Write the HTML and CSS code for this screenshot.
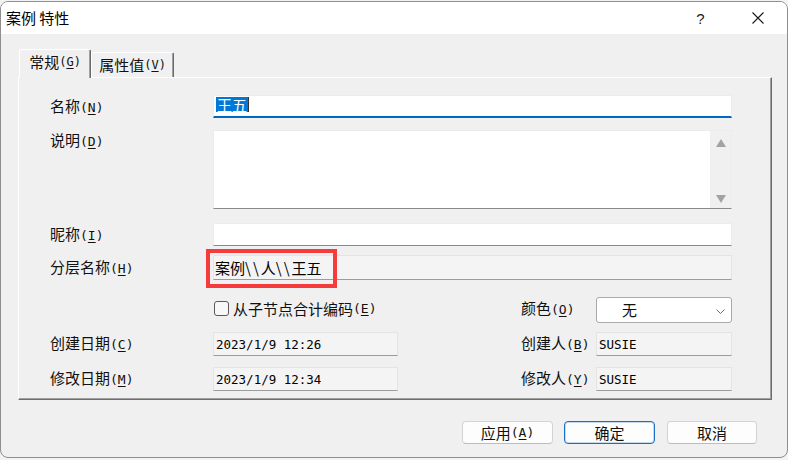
FILE: index.html
```html
<!DOCTYPE html>
<html lang="zh-CN">
<head>
<meta charset="utf-8">
<title>案例 特性</title>
<link rel="stylesheet" href="styles.css">
</head>
<body>
<div class="window">
  <div class="titlebar">
    <span class="title">案例 特性</span>
    <div class="caption">
      <span class="cap-btn help">?</span>
      <span class="cap-btn close">
        <svg width="12" height="12" viewBox="0 0 12 12"><path d="M0.5 0.5L11.5 11.5M11.5 0.5L0.5 11.5" stroke="#1a1a1a" stroke-width="1.1" fill="none"/></svg>
      </span>
    </div>
  </div>
  <div class="body">
    <div class="tabs">
      <div class="tab active">常规<span class="mn">(<u>G</u>)</span></div>
      <div class="tab">属性值<span class="mn">(<u>V</u>)</span></div>
    </div>
    <div class="panel">
      <div class="row r-name">
        <label class="lbl">名称<span class="mn">(<u>N</u>)</span></label>
        <div class="edit focused wide"><span class="sel">王五</span><span class="caret"></span></div>
      </div>
      <div class="row r-desc">
        <label class="lbl">说明<span class="mn">(<u>D</u>)</span></label>
        <div class="edit memo wide">
          <div class="scroll"><span class="arr up"></span><span class="arr down"></span></div>
        </div>
      </div>
      <div class="row r-nick">
        <label class="lbl">昵称<span class="mn">(<u>I</u>)</span></label>
        <div class="edit wide"></div>
      </div>
      <div class="row r-hier">
        <label class="lbl">分层名称<span class="mn">(<u>H</u>)</span></label>
        <div class="ro hier wide">
          <span class="htext">案例<span class="bs">\\</span>人<span class="bs">\\</span>王五</span>
          <div class="mark"></div>
        </div>
      </div>
      <div class="row r-check">
        <label class="chk"><span class="box"></span>从子节点合计编码<span class="mn">(<u>E</u>)</span></label>
        <label class="lbl2">颜色<span class="mn">(<u>O</u>)</span></label>
        <div class="combo">
          <span class="combo-val">无</span>
          <svg class="chev" width="9" height="5" viewBox="0 0 9 5"><path d="M0.5 0.5L4.5 4.5L8.5 0.5" stroke="#6b6b6b" stroke-width="1" fill="none"/></svg>
        </div>
      </div>
      <div class="row r-created">
        <label class="lbl">创建日期<span class="mn">(<u>C</u>)</span></label>
        <div class="ro date">2023/1/9 12:26</div>
        <label class="lbl2 gapped">创建人<span class="mn">(<u>B</u>)</span></label>
        <div class="ro user">SUSIE</div>
      </div>
      <div class="row r-modified">
        <label class="lbl">修改日期<span class="mn">(<u>M</u>)</span></label>
        <div class="ro date">2023/1/9 12:34</div>
        <label class="lbl2 gapped">修改人<span class="mn">(<u>Y</u>)</span></label>
        <div class="ro user">SUSIE</div>
      </div>
    </div>
    <div class="buttons">
      <div class="btn">应用<span class="mn">(<u>A</u>)</span></div>
      <div class="btn default">确定</div>
      <div class="btn cancel">取消</div>
    </div>
  </div>
</div>
</body>
</html>
```

FILE: styles.css
```css
html, body {
  margin: 0;
  padding: 0;
}
body {
  background: #f3f3f3;
  font-family: "Noto Sans CJK SC", "Noto Sans", sans-serif;
  color: #111;
}
.window {
  margin-top: 1px;
  width: 788px;
  height: 457px;
  box-sizing: border-box;
  border: 1px solid #8e8e8e;
  border-radius: 8px;
  overflow: hidden;
  display: flex;
  flex-direction: column;
  background: #f0f0f0;
}
.titlebar {
  height: 32px;
  flex: none;
  background: #fff;
  display: flex;
  align-items: center;
}
.title {
  flex: 1;
  padding-left: 5px;
  font-size: 15px;
  line-height: 20px;
  color: #000;
}
.caption {
  display: flex;
  height: 32px;
}
.cap-btn {
  width: 57px;
  display: flex;
  align-items: center;
  justify-content: center;
}
.cap-btn.close {
  width: 58px;
}
.help {
  font-family: "Liberation Sans", sans-serif;
  font-size: 15px;
  color: #1a1a1a;
  padding-top: 1px;
}
.body {
  flex: 1;
  padding: 15px 0 0 17px;
}
.mn {
  font-family: "DejaVu Sans Mono", "Liberation Mono", monospace;
  font-size: 13px;
}
.mn u {
  text-underline-offset: 2px;
}
.tabs {
  display: flex;
  align-items: flex-end;
  height: 28px;
  padding-left: 1px;
  position: relative;
  z-index: 1;
}
.tab {
  box-sizing: border-box;
  height: 25px;
  width: 83px;
  background: #f0f0f0;
  border-top: 1px solid #fff;
  border-left: 1px solid #fff;
  border-right: 1px solid #696969;
  box-shadow: inset -1px 0 0 #a0a0a0;
  border-radius: 2px 2px 0 0;
  font-size: 15px;
  line-height: 20px;
  display: flex;
  align-items: center;
  justify-content: center;
  padding-bottom: 1px;
}
.tab .mn {
  font-size: 12px;
}
.tab.active {
  width: 72px;
  height: 29px;
  margin-bottom: -1px;
  padding-bottom: 4px;
}
.panel {
  box-sizing: border-box;
  width: 754px;
  height: 323px;
  border-top: 1px solid #fff;
  border-left: 1px solid #fff;
  border-right: 1px solid #6d6d6d;
  border-bottom: 1px solid #6d6d6d;
  box-shadow: inset -1px -1px 0 #a0a0a0;
  padding: 17px 0 0 31px;
}
.row {
  display: flex;
  align-items: center;
}
.lbl {
  width: 163px;
  flex: none;
  font-size: 15px;
  line-height: 20px;
}
.lbl2 {
  width: 75px;
  flex: none;
  font-size: 15px;
  line-height: 20px;
}
.lbl2.gapped {
  margin-left: 123px;
}
.wide {
  width: 519px;
}
.edit {
  box-sizing: border-box;
  height: 23px;
  background: #fff;
  border: 1px solid #ececec;
  border-bottom: 1px solid #888;
  flex: none;
}
.edit.focused {
  border-bottom: 2px solid #0067c0;
  display: flex;
  align-items: flex-start;
}
.sel {
  display: inline-block;
  margin: 1px 0 0 2px;
  padding: 0 1px;
  height: 15px;
  line-height: 15px;
  font-size: 15px;
  background: #0078d7;
  color: #fff;
}
.caret {
  display: inline-block;
  width: 1px;
  height: 15px;
  margin-top: 1px;
  background: #333;
}
.r-desc {
  margin-top: 12px;
  align-items: flex-start;
}
.memo {
  height: 79px;
  display: flex;
  justify-content: flex-end;
  border-bottom-color: #8a8a8a;
}
.scroll {
  width: 21px;
  background: #f0f0f0;
  display: flex;
  flex-direction: column;
  justify-content: space-between;
  align-items: center;
  padding: 8px 0 5px;
  box-sizing: border-box;
}
.arr {
  width: 0;
  height: 0;
  border-left: 5.5px solid transparent;
  border-right: 5.5px solid transparent;
}
.arr.up {
  border-bottom: 8px solid #a3a3a3;
}
.arr.down {
  border-top: 8px solid #a3a3a3;
}
.r-nick {
  margin-top: 14px;
}
.r-hier {
  margin-top: 9px;
}
.ro {
  box-sizing: border-box;
  height: 24px;
  background: #f4f4f4;
  border: 1px solid #e4e4e4;
  border-bottom: 1px solid #9c9c9c;
  flex: none;
  display: flex;
  align-items: center;
}
.hier {
  height: 25px;
  position: relative;
  padding-left: 1px;
}
.htext {
  font-size: 15px;
  line-height: 20px;
  color: #000;
}
.bs {
  font-family: "Noto Sans CJK SC", sans-serif;
  font-size: 15px;
  letter-spacing: 2px;
}
.mark {
  position: absolute;
  left: -8px;
  top: -7px;
  width: 131px;
  height: 39px;
  box-sizing: border-box;
  border: 4px solid #f53b3b;
}
.r-check {
  margin-top: 17px;
  height: 26px;
}
.chk {
  margin-left: 163px;
  width: 308px;
  flex: none;
  box-sizing: border-box;
  padding-left: 1px;
  padding-bottom: 3px;
  display: flex;
  align-items: center;
  font-size: 15px;
  line-height: 20px;
}
.box {
  width: 15px;
  height: 15px;
  box-sizing: border-box;
  border: 1px solid #5a5a5a;
  border-radius: 3px;
  background: #f8f8f8;
  margin-right: 4px;
}
.r-check .lbl2 {
  padding-bottom: 2px;
}
.combo {
  width: 136px;
  height: 26px;
  box-sizing: border-box;
  background: #fff;
  border: 1px solid #a9a9a9;
  border-radius: 3px;
  display: flex;
  align-items: center;
  justify-content: space-between;
  padding: 0 6px 0 25px;
}
.combo-val {
  font-size: 15px;
  line-height: 20px;
}
.chev {
  margin-top: 2px;
}
.r-created {
  margin-top: 9px;
}
.r-modified {
  margin-top: 11px;
}
.date,
.user {
  padding-left: 2px;
  font-family: "DejaVu Sans Mono", "Liberation Mono", monospace;
  font-size: 12.5px;
  color: #000;
}
.date {
  width: 185px;
}
.user {
  width: 136px;
}
.buttons {
  display: flex;
  justify-content: flex-end;
  gap: 11px;
  margin-top: 21px;
  padding-right: 30px;
}
.btn {
  box-sizing: border-box;
  width: 91px;
  height: 23px;
  background: #fdfdfd;
  border: 1px solid #d3d3d3;
  border-bottom-color: #bcbcbc;
  border-radius: 4px;
  font-size: 15px;
  line-height: 20px;
  display: flex;
  align-items: center;
  justify-content: center;
}
.btn.default {
  border: 1px solid #1c6ec2;
  box-shadow: inset 0 0 0 1px rgba(28, 110, 194, 0.25);
}
.btn.cancel {
  width: 90px;
  margin-left: 1px;
}
```
